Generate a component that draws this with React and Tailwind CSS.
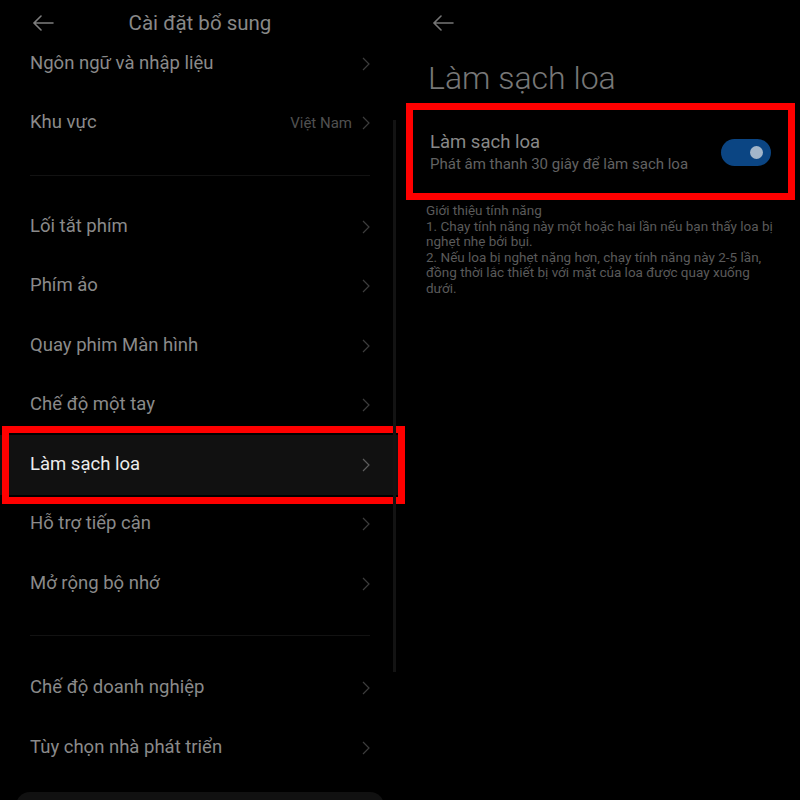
import React from 'react';

const font = { fontFamily: 'Roboto, "Noto Sans", sans-serif' };

function BackArrow({ color }) {
  return (
    <svg width="22" height="16" viewBox="0 0 22 16" fill="none" stroke={color} strokeWidth="1.6" strokeLinecap="round">
      <path d="M2 8h19M9 1L2 8l7 7" />
    </svg>
  );
}

function Chevron({ color = '#3d3d3d' }) {
  return (
    <svg width="8" height="14" viewBox="0 0 8 14" fill="none" stroke={color} strokeWidth="1.2">
      <path d="M1 1l6 6-6 6" />
    </svg>
  );
}

function Row({ label, value, active }) {
  const inner = (
    <div className={`flex h-[59.5px] items-center justify-between pl-[30px] pr-[30px] ${active ? 'bg-[#111111]' : ''}`}>
      <span className={`text-[18.5px] ${active ? 'text-[#ececec]' : 'text-[#8a8a8a]'}`}>{label}</span>
      <div className="flex items-center gap-[10px]">
        {value && <span className="text-[15px] text-[#505050]">{value}</span>}
        <Chevron color={active ? '#5e5e5e' : '#3d3d3d'} />
      </div>
    </div>
  );
  if (!active) return inner;
  return (
    <div className="relative">
      {inner}
      <div className="pointer-events-none absolute left-[2px] top-[-9px] h-[78px] w-[403px] border-[7px] border-[#ff0000]" />
    </div>
  );
}

function Divider() {
  return (
    <div className="flex h-[44px] items-center px-[30px]">
      <div className="h-px w-full bg-[#121212]" />
    </div>
  );
}

export default function App() {
  return (
    <div className="flex h-[800px] w-[800px] overflow-hidden bg-black" style={font}>
      <div className="relative w-[400px]">
        <div className="relative flex h-[34px] items-center">
          <div className="absolute left-[32px] top-[15px]">
            <BackArrow color="#7d7d7d" />
          </div>
          <div className="w-full pt-[12px] text-center text-[20.5px] text-[#888888]">Cài đặt bổ sung</div>
        </div>
        <Row label="Ngôn ngữ và nhập liệu" />
        <Row label="Khu vực" value="Việt Nam" />
        <Divider />
        <Row label="Lối tắt phím" />
        <Row label="Phím ảo" />
        <Row label="Quay phim Màn hình" />
        <Row label="Chế độ một tay" />
        <Row label="Làm sạch loa" active />
        <Row label="Hỗ trợ tiếp cận" />
        <Row label="Mở rộng bộ nhớ" />
        <div className="h-[45px] px-[30px] pt-[21px]">
          <div className="h-px w-full bg-[#121212]" />
        </div>
        <Row label="Chế độ doanh nghiệp" />
        <Row label="Tùy chọn nhà phát triển" />
        <div className="mx-[16px] mt-[14px] h-[40px] rounded-t-[14px] bg-[#111111]" />
        <div className="absolute left-[393px] top-[120px] h-[552px] w-[3px] bg-[#131313]" />
      </div>

      <div className="w-[400px]">
        <div className="pl-[32px] pt-[15px]">
          <BackArrow color="#757575" />
        </div>
        <div className="pl-[28px] pt-[27px] text-[32px] font-light leading-[40px] text-[#777777]">Làm sạch loa</div>
        <div className="ml-[6px] mt-[5px] h-[97px] w-[389px] border-[7px] border-[#ff0000]">
          <div className="flex h-full items-center justify-between pl-[17px] pr-[17px] pt-[2px]">
            <div className="flex flex-col">
              <span className="text-[18.5px] leading-[23px] text-[#888888]">Làm sạch loa</span>
              <span className="text-[15px] leading-[20px] text-[#626262]">Phát âm thanh 30 giây để làm sạch loa</span>
            </div>
            <div className="flex h-[27px] w-[50px] items-center justify-end rounded-full bg-[#0b4583] pr-[8px]">
              <div className="h-[13px] w-[13px] rounded-full bg-[#a3b6ca]" />
            </div>
          </div>
        </div>
        <div className="pl-[26px] pt-[3px] text-[13.5px] leading-[15.5px] text-[#5a5a5a]">
          <div>Giới thiệu tính năng</div>
          <div>1. Chạy tính năng này một hoặc hai lần nếu bạn thấy loa bị</div>
          <div>nghẹt nhẹ bởi bụi.</div>
          <div>2. Nếu loa bị nghẹt nặng hơn, chạy tính năng này 2-5 lần,</div>
          <div>đồng thời lắc thiết bị với mặt của loa được quay xuống</div>
          <div>dưới.</div>
        </div>
      </div>
    </div>
  );
}
